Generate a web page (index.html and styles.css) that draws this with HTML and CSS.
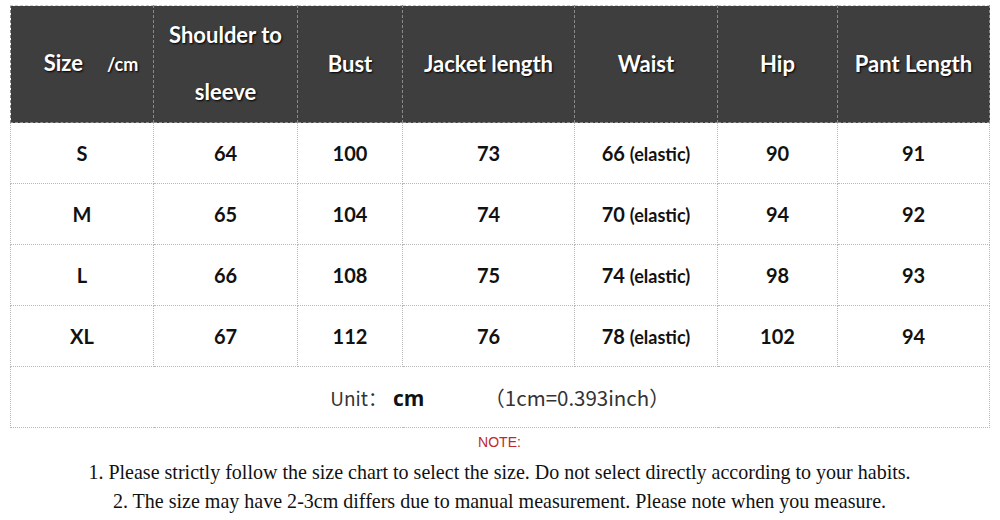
FILE: index.html
```html
<!DOCTYPE html>
<html>
<head>
<meta charset="utf-8">
<link rel="stylesheet" href="styles.css">
</head>
<body>
<div class="page">
  <table class="chart">
    <colgroup>
      <col class="c1"><col class="c2"><col class="c3"><col class="c4"><col class="c5"><col class="c6"><col class="c7">
    </colgroup>
    <thead>
      <tr>
        <th><span class="size">Size</span><span class="unit-small">/cm</span></th>
        <th class="two">Shoulder to<br>sleeve</th>
        <th>Bust</th>
        <th>Jacket length</th>
        <th>Waist</th>
        <th>Hip</th>
        <th>Pant Length</th>
      </tr>
    </thead>
    <tbody>
      <tr><td>S</td><td>64</td><td>100</td><td>73</td><td>66 <span class="el">(elastic)</span></td><td>90</td><td>91</td></tr>
      <tr><td>M</td><td>65</td><td>104</td><td>74</td><td>70 <span class="el">(elastic)</span></td><td>94</td><td>92</td></tr>
      <tr><td>L</td><td>66</td><td>108</td><td>75</td><td>74 <span class="el">(elastic)</span></td><td>98</td><td>93</td></tr>
      <tr><td>XL</td><td>67</td><td>112</td><td>76</td><td>78 <span class="el">(elastic)</span></td><td>102</td><td>94</td></tr>
      <tr class="unit-row"><td colspan="7"><span class="u1">Unit：</span><span class="u2">cm</span><span class="u3">（1cm=0.393inch）</span></td></tr>
    </tbody>
  </table>
  <div class="notes">
    <div class="note-title">NOTE:</div>
    <p class="note-line">1. Please strictly follow the size chart to select the size. Do not select directly according to your habits.</p>
    <p class="note-line">2. The size may have 2-3cm differs due to manual measurement. Please note when you measure.</p>
  </div>
</div>
</body>
</html>
```

FILE: styles.css
```css
html, body {
  margin: 0;
  padding: 0;
  background: #ffffff;
}
.page {
  padding: 5px 0 0 10px;
  width: 980px;
}
.chart {
  border-collapse: collapse;
  width: 979px;
  table-layout: fixed;
  font-family: "Lato", "Open Sans", sans-serif;
}
.c1 { width: 143px; }
.c2 { width: 144px; }
.c3 { width: 105px; }
.c4 { width: 172px; }
.c5 { width: 143px; }
.c6 { width: 120px; }
.c7 { width: 152px; }

.chart th {
  background: #3e3e3e;
  color: #ffffff;
  font-weight: 700;
  font-size: 22px;
  height: 117px;
  padding: 0 0 2px 0;
  text-align: center;
  border: 1px dashed #8a8a8a;
  border-top-color: #cccccc;
  text-shadow: 1px 1px 2px #000000;
  line-height: 57px;
  box-sizing: border-box;
}
.chart th .size {
  margin-right: 24px;
  margin-left: 18px;
}
.chart th .unit-small {
  font-size: 18px;
}
.chart td {
  height: 61px;
  padding: 0;
  text-align: center;
  font-size: 20px;
  font-weight: 700;
  color: #111111;
  border: 1px dotted #b8b8b8;
  box-sizing: border-box;
}
.chart .el {
  font-size: 18px;
}
.unit-row td {
  font-weight: 400;
  color: #333333;
  font-size: 19px;
  font-family: "Noto Sans CJK SC", "Lato", sans-serif;
}
.u2 {
  font-weight: 700;
  color: #111111;
  font-size: 21px;
  font-family: "Open Sans", sans-serif;
  margin-left: 6px;
  margin-right: 60px;
}
.u3 {
  font-size: 20.5px;
  font-family: "Noto Sans CJK SC", "Lato", sans-serif;
}
.notes {
  text-align: center;
  width: 979px;
}
.note-title {
  color: #c0282a;
  font-family: "Liberation Sans Narrow", "Liberation Sans", sans-serif;
  font-size: 14px;
  margin-top: 6px;
  line-height: 16px;
}
.note-line {
  margin: 0;
  font-family: "Liberation Serif", serif;
  font-size: 22px;
  line-height: 29px;
  color: #111111;
  transform: scaleX(0.91);
}
.note-line:first-of-type {
  margin-top: 7px;
}
```
